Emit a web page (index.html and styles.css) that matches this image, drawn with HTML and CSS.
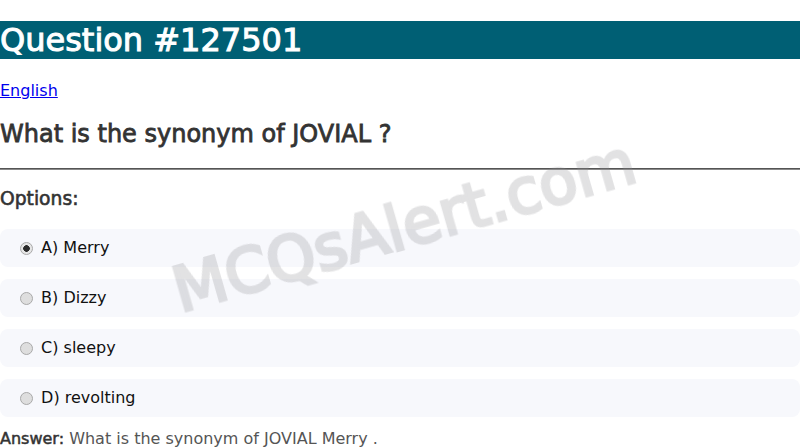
FILE: index.html
```html
<!DOCTYPE html>
<html lang="en">
<head>
<meta charset="utf-8">
<title>Question #127501</title>
<link rel="stylesheet" href="styles.css">
</head>
<body>
<h1 class="title">Question #127501</h1>
<p class="lang"><a href="#">English</a></p>
<h2 class="question">What is the synonym of JOVIAL ?</h2>
<hr class="rule">
<h3 class="opts-head">Options:</h3>
<div class="options">
  <label class="option"><input type="radio" name="q" checked> A) Merry</label>
  <label class="option"><input type="radio" name="q"> B) Dizzy</label>
  <label class="option"><input type="radio" name="q"> C) sleepy</label>
  <label class="option"><input type="radio" name="q"> D) revolting</label>
</div>
<p class="answer"><strong>Answer:</strong> What is the synonym of JOVIAL Merry .</p>
<div class="watermark">MCQsAlert.com</div>
</body>
</html>
```
FILE: styles.css
```css
html, body {
  margin: 0;
  padding: 0;
}
body {
  font-family: "DejaVu Sans", sans-serif;
  background: #fff;
  color: #333;
  overflow: hidden;
}
.title {
  font-size: 32px;
  font-weight: normal;
  -webkit-text-stroke: 1px #fff;
  margin: 21.44px 0;
  background: #005f74;
  color: #fff;
}
.lang {
  margin: 16px 0;
  font-size: 16px;
}
.lang a {
  color: #0000ee;
}
.question {
  font-size: 24px;
  font-weight: normal;
  -webkit-text-stroke: 0.8px #333;
  margin: 19.92px 0;
  color: #333;
}
.rule {
  margin: 8px 0;
  border: 0;
  border-top: 1px solid #555;
  border-bottom: 1px solid #8a8a8a;
  height: 0;
}
.opts-head {
  font-size: 18.72px;
  font-weight: normal;
  -webkit-text-stroke: 0.6px #333;
  margin: 18.72px 0;
  color: #333;
}
.options {
  display: flex;
  flex-direction: column;
  gap: 12px;
  margin-top: 19.5px;
}
.option {
  display: block;
  background: #f7f8fc;
  border-radius: 8px;
  padding: 10px 15px;
  line-height: 18px;
  font-size: 16px;
  color: #111;
}
.option input {
  -webkit-appearance: none;
  appearance: none;
  box-sizing: border-box;
  width: 13px;
  height: 13px;
  margin: 3px 3px 0 5px;
  vertical-align: top;
  border-radius: 50%;
  border: 1px solid #a9a9a9;
  background: #dedede;
}
.option input:checked {
  background: radial-gradient(circle, #2b2b2b 0 3px, #e6e6e6 3.6px);
}
.answer {
  margin: 12px 0 0;
  font-size: 16px;
  color: #555;
}
.answer strong {
  color: #333;
  font-weight: normal;
  -webkit-text-stroke: 0.5px #333;
}
.watermark {
  position: fixed;
  left: 50.5%;
  top: 50.5%;
  transform: translate(-50%, -50%) rotate(-16deg);
  font-size: 62px;
  font-weight: normal;
  color: #8e8e94;
  -webkit-text-stroke: 3px #8e8e94;
  opacity: 0.26;
  white-space: nowrap;
  pointer-events: none;
}
```
